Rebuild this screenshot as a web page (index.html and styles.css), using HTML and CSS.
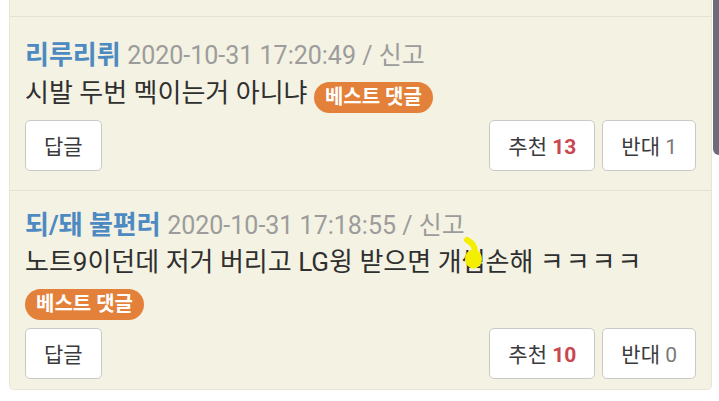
FILE: index.html
```html
<!DOCTYPE html>
<html lang="ko">
<head>
<meta charset="utf-8">
<link rel="stylesheet" href="styles.css">
</head>
<body>
<div class="panel">
  <div class="item first">
    <div class="meta"><span class="nick">리루리뤼</span> <span class="date">2020-10-31 17:20:49 / 신고</span></div>
    <div class="text">시발 두번 멕이는거 아니냐 <span class="best">베스트 댓글</span></div>
    <div class="actions">
      <button class="btn">답글</button>
      <div class="votes">
        <button class="btn vote">추천 <b class="up">13</b></button>
        <button class="btn vote">반대 <span class="down">1</span></button>
      </div>
    </div>
  </div>
  <div class="item last">
    <div class="meta"><span class="nick">되/돼 불편러</span> <span class="date">2020-10-31 17:18:55 / 신고</span></div>
    <div class="text">노트9이던데 저거 버리고 LG윙 받으면 개씹손해 <span class="kk">ㅋㅋㅋㅋ</span> <span class="best">베스트 댓글</span></div>
    <div class="actions">
      <button class="btn">답글</button>
      <div class="votes">
        <button class="btn vote">추천 <b class="up">10</b></button>
        <button class="btn vote">반대 <span class="down">0</span></button>
      </div>
    </div>
  </div>
</div>
<div class="scrollbar"></div>
<svg class="mark" width="26" height="36" viewBox="0 0 26 36">
  <path d="M6 4 C10 6 14 9 14 16" fill="none" stroke="#f4ee00" stroke-width="6" stroke-linecap="round"/>
  <ellipse cx="12.5" cy="23" rx="8.5" ry="9.5" fill="#f4ee00"/>
</svg>
</body>
</html>
```

FILE: styles.css
```css
html, body {
  margin: 0;
  padding: 0;
  background: #ffffff;
}
body {
  width: 719px;
  height: 401px;
  overflow: hidden;
  position: relative;
  font-family: "Roboto", "Noto Sans CJK KR", sans-serif;
}
.panel {
  margin-left: 9px;
  width: 703px;
  box-sizing: border-box;
  background: #f4f2e2;
  border: 1px solid #e7e5d4;
  border-top: none;
  border-radius: 0 0 5px 5px;
  padding-top: 16px;
}
.item {
  border-top: 1px solid #e4e2d1;
  padding: 16px 15px 19px 15px;
}
.item.first {
  padding-top: 20px;
}
.item.last {
  padding-bottom: 10px;
}
.meta, .text {
  font-size: 26px;
  line-height: 37.5px;
  white-space: nowrap;
}
.text {
  white-space: normal;
  color: #2f2f2f;
}
.kk {
  letter-spacing: 2px;
}
.nick {
  color: #4d8ac2;
  font-weight: 700;
}
.date {
  color: #9c9c9c;
  font-size: 25px;
}
.best {
  display: inline-block;
  background: #e3813a;
  color: #fff;
  font-weight: 700;
  font-size: 20px;
  line-height: 31px;
  height: 31px;
  padding: 0 11px;
  border-radius: 16px;
  vertical-align: top;
  margin-top: 7px;
}
.actions {
  display: flex;
  justify-content: space-between;
  margin-top: 7px;
}
.item.last .actions {
  margin-top: 8px;
}
.votes {
  display: flex;
  gap: 7px;
}
.btn {
  font-family: "Roboto", "Noto Sans CJK KR", sans-serif;
  font-size: 21px;
  color: #3a3a3a;
  background: #fff;
  border: 1px solid #c9c9c6;
  border-radius: 5px;
  height: 51px;
  padding: 0 18px;
  box-sizing: border-box;
  min-width: 74px;
}
.up {
  color: #c9474f;
  font-weight: 700;
}
.down {
  color: #7a7a7a;
}
.scrollbar {
  position: absolute;
  right: 0;
  top: 0;
  width: 6px;
  height: 155px;
  background: #6d6b79;
  border-radius: 0 0 0 6px;
}
.mark {
  position: absolute;
  left: 461px;
  top: 236px;
}
```
